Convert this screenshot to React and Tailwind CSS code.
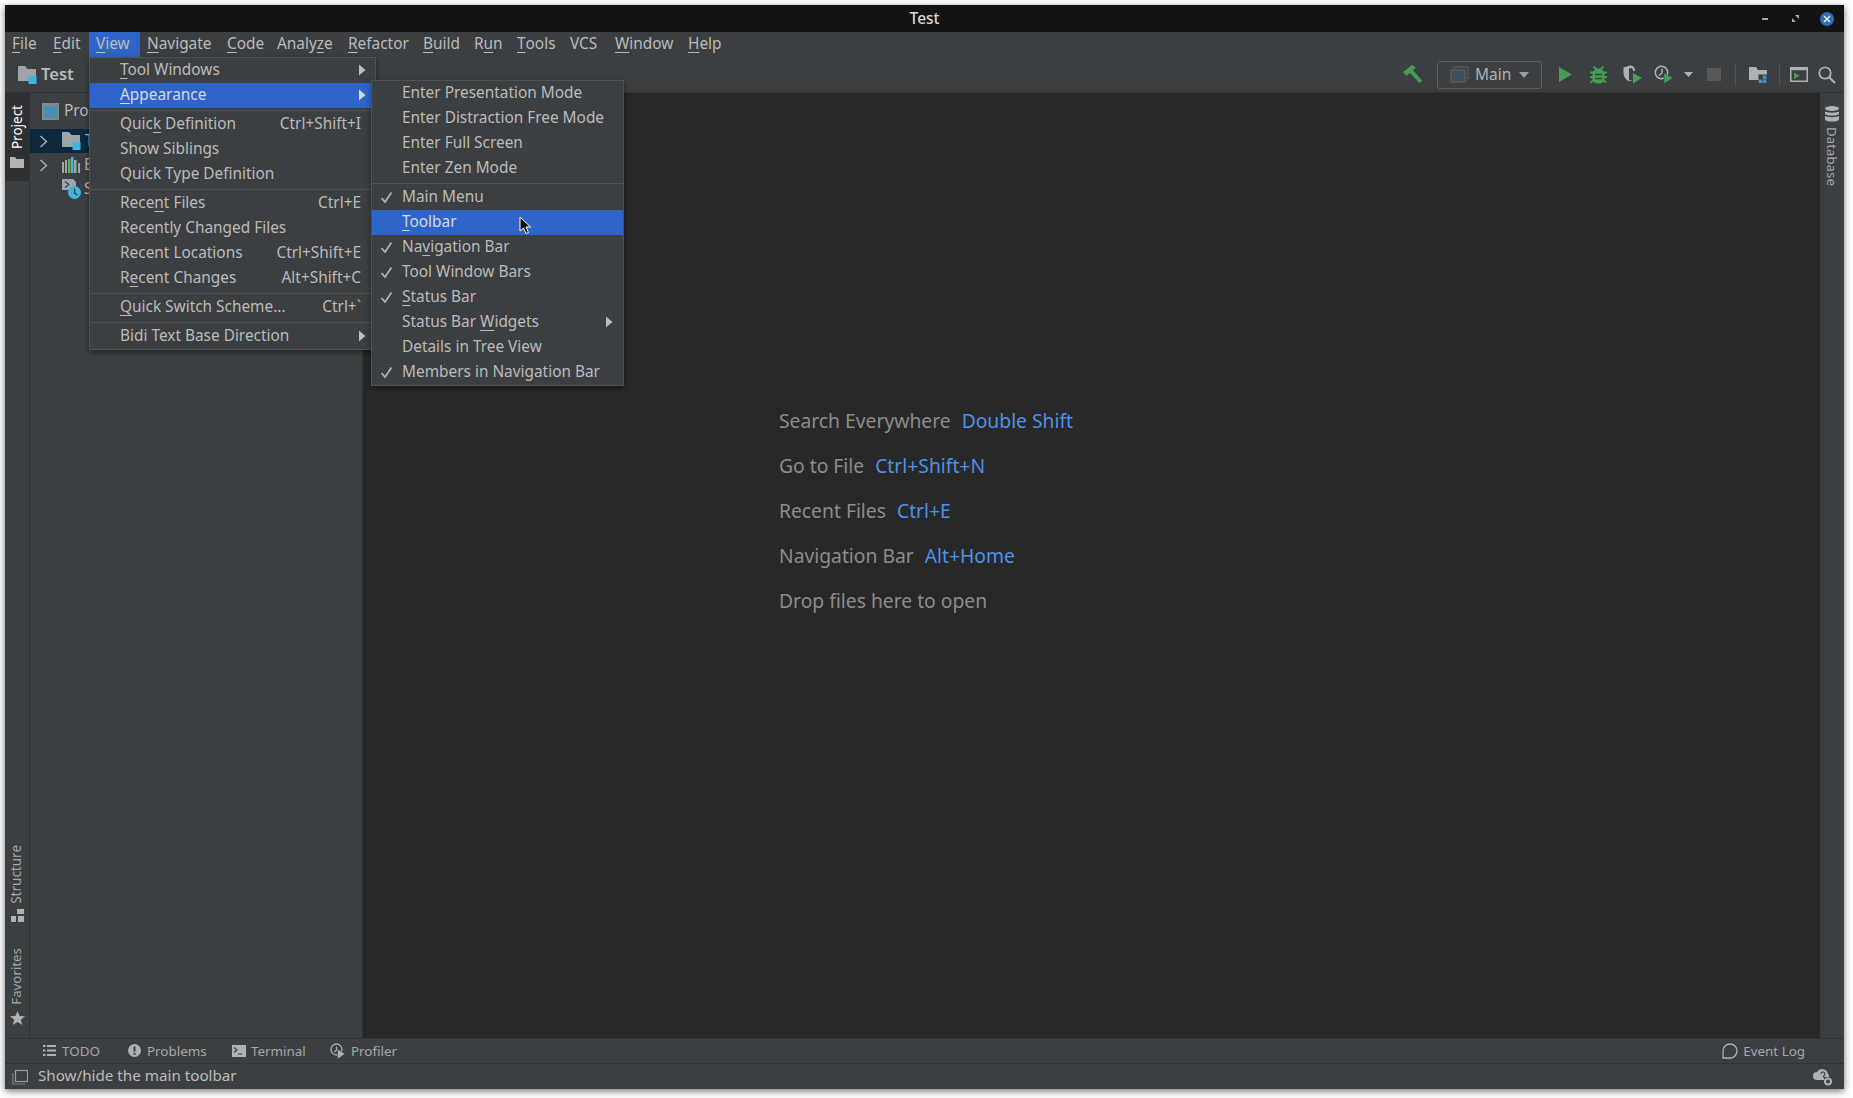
const FONT = "[font-family:'Noto_Sans','Open_Sans',sans-serif]";

function U({ children }) {
  return <span className="underline underline-offset-[3px] decoration-1">{children}</span>;
}

function MenuBarItem({ w, active, children }) {
  return (
    <div className={`h-full flex items-center pl-[7px] pb-[1px] whitespace-nowrap ${w} ${active ? "bg-[#2f65ca]" : ""}`}>
      {children}
    </div>
  );
}

function Arrow() {
  return (
    <svg width="8" height="12" viewBox="0 0 8 12" className="shrink-0">
      <path d="M1 0.5 L7.5 6 L1 11.5 Z" fill="currentColor" />
    </svg>
  );
}

function Check() {
  return (
    <svg width="13" height="13" viewBox="0 0 13 13" className="absolute left-[8px] top-[6px]">
      <path d="M1.5 7 L5 11 L11.5 1.5" fill="none" stroke="#b0b0b0" strokeWidth="1.8" />
    </svg>
  );
}

function Row({ children, shortcut, sub, selected, check, pad }) {
  return (
    <div className={`relative h-[25px] flex items-center justify-between whitespace-nowrap pb-[1px] ${pad} ${selected ? "bg-[#2f65ca] text-[#d5d9e2]" : ""}`}>
      {check && <Check />}
      <span>{children}</span>
      {shortcut && <span className="pr-[5px]">{shortcut}</span>}
      {sub && <Arrow />}
    </div>
  );
}

function Sep() {
  return (
    <div className="h-[4px] flex items-center">
      <div className="h-px w-full bg-[#515151]" />
    </div>
  );
}

function FolderBlue({ className }) {
  return (
    <svg width="19" height="18" viewBox="0 0 19 18" className={className}>
      <path d="M0 0h7l2.5 3H18v9.5h-7V15H0z" fill="#9ea5a9" />
      <rect x="10.5" y="10" width="8" height="8" fill="#3fb5e2" />
    </svg>
  );
}

function Vert({ children, className }) {
  return <span className={`[writing-mode:vertical-rl] rotate-180 leading-none whitespace-nowrap ${className}`}>{children}</span>;
}

const viewPad = "pl-[30px] pr-[9px]";
const subPad = "pl-[30px] pr-[10px]";

export default function App() {
  return (
    <div className={`relative w-[1853px] h-[1098px] bg-white pl-[5px] pt-[5px] overflow-hidden ${FONT}`}>
      <div className="relative w-[1839px] h-[1084px] flex flex-col bg-[#3c3f41] text-[#bbbbbb] text-[15.4px] shadow-[0_2px_7px_rgba(0,0,0,0.55)]">
        {/* Title bar */}
        <div className="relative h-[27px] shrink-0 bg-[#131313] flex items-center justify-center text-[#d8d8d8] text-[15.5px] font-medium">
          <span className="pt-[1px]">Test</span>
          <div className="absolute right-0 top-0 h-full flex items-center">
            <div className="w-[6px] h-[2px] bg-[#a8a8a8] mr-[24px]" />
            <svg width="7" height="7" viewBox="0 0 7 7" className="mr-[21px]">
              <path d="M3 0h4v4z M4 7H0V3z" fill="#a8a8a8" />
            </svg>
            <div className="w-[14px] h-[14px] rounded-full bg-[#2f6fb8] flex items-center justify-center mr-[10px]">
              <svg width="8" height="8" viewBox="0 0 8 8">
                <path d="M1 1 L7 7 M7 1 L1 7" stroke="#dfe6ee" strokeWidth="1.6" />
              </svg>
            </div>
          </div>
        </div>

        {/* Menu bar */}
        <div className="h-[25px] shrink-0 flex items-center">
          <MenuBarItem w="w-[41px]"><U>F</U>ile</MenuBarItem>
          <MenuBarItem w="w-[43px]"><U>E</U>dit</MenuBarItem>
          <MenuBarItem w="w-[51px]" active><U>V</U>iew</MenuBarItem>
          <MenuBarItem w="w-[80px]"><U>N</U>avigate</MenuBarItem>
          <MenuBarItem w="w-[50px]"><U>C</U>ode</MenuBarItem>
          <MenuBarItem w="w-[71px]">Analy<U>z</U>e</MenuBarItem>
          <MenuBarItem w="w-[75px]"><U>R</U>efactor</MenuBarItem>
          <MenuBarItem w="w-[51px]"><U>B</U>uild</MenuBarItem>
          <MenuBarItem w="w-[43px]">R<U>u</U>n</MenuBarItem>
          <MenuBarItem w="w-[53px]"><U>T</U>ools</MenuBarItem>
          <MenuBarItem w="w-[45px]">VCS</MenuBarItem>
          <MenuBarItem w="w-[73px]"><U>W</U>indow</MenuBarItem>
          <MenuBarItem w="w-[50px]"><U>H</U>elp</MenuBarItem>
        </div>

        {/* Navigation / tool bar */}
        <div className="h-[36px] shrink-0 flex items-center border-b border-[#323232]">
          <FolderBlue className="ml-[13px] mr-[4px]" />
          <span className="font-semibold text-[16.5px] mr-auto">Test</span>
          <svg width="20" height="19" viewBox="0 0 20 19" className="mr-[14px]">
            <path d="M0 7 L9 0 L13 2.5 L10 5 L19 15.5 L16.5 18 L7 8 L3.5 11 Z" fill="#499c54" />
          </svg>
          <div className="w-[105px] h-[28px] border border-[#5e6060] rounded-[3px] flex items-center">
            <svg width="19" height="17" viewBox="0 0 19 17" className="ml-[12px] mr-[6px]">
              <path d="M4 3V1h14v11h-2" fill="none" stroke="#55585a" strokeWidth="1.4" />
              <rect x="1" y="4" width="14" height="12" fill="#39505c" stroke="#55585a" strokeWidth="1.6" />
            </svg>
            <span className="text-[#aeb2b5] text-[15.5px] w-[44px]">Main</span>
            <svg width="10" height="6" viewBox="0 0 10 6"><path d="M0 0h10L5 6z" fill="#9b9ea0" /></svg>
          </div>
          <svg width="13" height="15" viewBox="0 0 13 15" className="ml-[17px]"><path d="M0 0 L13 7.5 L0 15 Z" fill="#499c54" /></svg>
          <svg width="17" height="18" viewBox="0 0 17 18" className="ml-[18px]">
            <path d="M3.5 0.5 L6.5 3.5 H10.5 L13.5 0.5 M0 6.5h3 M14 6.5h3 M0 11h3 M14 11h3 M0.5 16.5 L4 14 M16.5 16.5 L13 14" fill="none" stroke="#499c54" strokeWidth="2" />
            <rect x="2.5" y="3" width="12" height="14.5" rx="5" fill="#499c54" />
            <path d="M5 8.5h7 M5 12.5h7" stroke="#3c3f41" strokeWidth="1.3" />
          </svg>
          <svg width="20" height="19" viewBox="0 0 20 19" className="ml-[16px]">
            <path d="M0.5 2.5 L7 0.5 L10 1.5 V15 L6 16 C3 15 0.5 12 0.5 7 Z" fill="#afb1b3" />
            <path d="M6 3.5 L9 3 C10.5 3 11 4 11 5 V15 L6 15 Z" fill="#3c3f41" />
            <path d="M7 0.5 C11 0.7 12 3 12 6 H10 C10 3.5 9 2.5 7 2.5 Z" fill="#afb1b3" />
            <path d="M10 8 L19 13 L10 18.5 Z" fill="#499c54" />
          </svg>
          <svg width="20" height="19" viewBox="0 0 20 19" className="ml-[11px]">
            <circle cx="7.5" cy="7.5" r="6.2" fill="none" stroke="#afb1b3" strokeWidth="1.5" />
            <path d="M8 3.5 V8 L5 10.5" fill="none" stroke="#afb1b3" strokeWidth="1.4" />
            <path d="M10 8 L19 13 L10 18.5 Z" fill="#499c54" stroke="#3c3f41" strokeWidth="0.5" />
          </svg>
          <svg width="9" height="5" viewBox="0 0 9 5" className="ml-[10px]"><path d="M0 0h9L4.5 5z" fill="#afb1b3" /></svg>
          <div className="w-[14px] h-[13px] bg-[#585858] ml-[14px]" />
          <div className="w-px h-[23px] bg-[#505254] ml-[14px]" />
          <svg width="18" height="16" viewBox="0 0 18 16" className="ml-[13px]">
            <path d="M0 0h7l2 3h9v4.5H9.5V13H0z" fill="#afb1b3" />
            <path d="M13.8 8.5h3.6v3.4h-3.6z M9.8 12.5h3.4V16H9.8z M13.8 12.5h3.6V16h-3.6z" fill="#3d8fc6" />
          </svg>
          <div className="w-px h-[23px] bg-[#505254] ml-[12px]" />
          <svg width="18" height="15" viewBox="0 0 18 15" className="ml-[10px]">
            <rect x="0.75" y="0.75" width="16.5" height="13.5" fill="none" stroke="#afb1b3" strokeWidth="1.5" />
            <rect x="0.75" y="0.75" width="16.5" height="2.5" fill="#afb1b3" />
            <path d="M4 5.5 L10 8.7 L4 12 Z" fill="#499c54" />
          </svg>
          <svg width="18" height="18" viewBox="0 0 18 18" className="ml-[10px] mr-[8px]">
            <circle cx="7" cy="7" r="5.7" fill="none" stroke="#afb1b3" strokeWidth="1.8" />
            <path d="M11 11 L17 17" stroke="#afb1b3" strokeWidth="2.2" />
          </svg>
        </div>

        {/* Middle */}
        <div className="flex-1 min-h-0 flex">
          {/* Left stripe */}
          <div className="w-[25px] shrink-0 border-r border-[#323232] flex flex-col justify-between items-center">
            <div className="w-full h-[88px] bg-[#2e3031] flex flex-col items-center pt-[12px] gap-[8px]">
              <Vert className="text-white text-[13.5px] ml-[1px]">Project</Vert>
              <svg width="14" height="11" viewBox="0 0 14 11"><path d="M0 0h5l1.5 2H14v9H0z" fill="#b4b4b4" /></svg>
            </div>
            <div className="flex flex-col items-center mb-[13px]">
              <Vert className="text-[#a5a8aa] text-[13.5px]">Structure</Vert>
              <svg width="13" height="13" viewBox="0 0 13 13" className="mt-[5px] mb-[26px]">
                <path d="M6 0h7v5H6z M0 7h5v6H0z M7 7h6v6H7z" fill="#afb1b3" />
              </svg>
              <Vert className="text-[#a5a8aa] text-[13.3px]">Favorites</Vert>
              <svg width="15" height="14" viewBox="0 0 15 14" className="mt-[6px]">
                <path d="M7.5 0 L9.6 5 L15 5.3 L10.8 8.7 L12.2 14 L7.5 11 L2.8 14 L4.2 8.7 L0 5.3 L5.4 5 Z" fill="#b0b0b0" />
              </svg>
            </div>
          </div>

          {/* Project panel */}
          <div className="w-[333px] shrink-0 flex flex-col border-r border-[#323232]">
            <div className="h-[36px] flex items-center pl-[12px] gap-[5px]">
              <svg width="17" height="17" viewBox="0 0 17 17">
                <rect x="1" y="1" width="15" height="15" fill="#478fb3" stroke="#82898d" strokeWidth="2" />
                <rect x="1" y="1" width="15" height="2.5" fill="#82898d" />
              </svg>
              <span>Pro</span>
            </div>
            <div className="h-[24px] bg-[#0d293e] flex items-center pl-[9px]">
              <svg width="9" height="13" viewBox="0 0 9 13" className="mr-[14px]"><path d="M1.5 1 L7.5 6.5 L1.5 12" fill="none" stroke="#afb1b3" strokeWidth="1.4" /></svg>
              <FolderBlue className="mr-[4px]" />
              <span>T</span>
            </div>
            <div className="h-[24px] flex items-center pl-[9px]">
              <svg width="9" height="13" viewBox="0 0 9 13" className="mr-[14px]"><path d="M1.5 1 L7.5 6.5 L1.5 12" fill="none" stroke="#afb1b3" strokeWidth="1.4" /></svg>
              <svg width="18" height="16" viewBox="0 0 18 16" className="mr-[4px]">
                <path d="M0 5h2v11H0z M3 3h2v13H3z M12 3h2.5v13H12z M16 6h2v10h-2z" fill="#9aa7b0" />
                <path d="M6 2h2.5v14H6z" fill="#62b543" />
                <path d="M9 0h2.5v16H9z" fill="#40b6e0" />
              </svg>
              <span>E</span>
            </div>
            <div className="h-[24px] flex items-center pl-[32px]">
              <svg width="19" height="20" viewBox="0 0 19 20" className="mr-[3px]">
                <path d="M0 0h11l3 3v4a6 6 0 0 0-6 4H0z" fill="#9aa7b0" />
                <path d="M3 2.5 L7 5.5 L3 8.5" fill="none" stroke="#3c3f41" strokeWidth="1.2" />
                <circle cx="12.5" cy="13.5" r="6.5" fill="#40b6e0" />
                <path d="M12.5 9.5 V14 L15.5 16" fill="none" stroke="#3c3f41" strokeWidth="1.4" />
              </svg>
              <span>S</span>
            </div>
          </div>

          {/* Editor */}
          <div className="flex-1 min-w-0 bg-[#282828] pl-[416px] pt-[305px] text-[19.3px] text-[#8c8c8c] leading-[45px]">
            <div>Search Everywhere<span className="ml-[11px] text-[#4e91ea]">Double Shift</span></div>
            <div>Go to File<span className="ml-[11px] text-[#4e91ea]">Ctrl+Shift+N</span></div>
            <div>Recent Files<span className="ml-[11px] text-[#4e91ea]">Ctrl+E</span></div>
            <div>Navigation Bar<span className="ml-[11px] text-[#4e91ea]">Alt+Home</span></div>
            <div>Drop files here to open</div>
          </div>

          {/* Right stripe */}
          <div className="w-[24px] shrink-0 flex flex-col items-center pt-[13px] gap-[5px] pr-[1px]">
            <svg width="14" height="16" viewBox="0 0 14 16">
              <ellipse cx="7" cy="2.5" rx="7" ry="2.5" fill="#afb1b3" />
              <path d="M0 5.5c2 1.5 12 1.5 14 0V8c-2 2-12 2-14 0z M0 10c2 1.5 12 1.5 14 0v3.5c-2 3-12 3-14 0z" fill="#afb1b3" />
            </svg>
            <span className="[writing-mode:vertical-rl] text-[13.3px] leading-none text-[#a5a8aa]">Database</span>
          </div>
        </div>

        {/* Tool windows bar */}
        <div className="h-[25px] shrink-0 flex items-center border-t border-[#323232] text-[13.4px] text-[#a5a8aa] pl-[38px]">
          <div className="flex items-center gap-[6px] w-[85px]">
            <svg width="13" height="11" viewBox="0 0 13 11"><path d="M0 0h2.5v2H0z M0 4.5h2.5v2H0z M0 9h2.5v2H0z M4 0h9v2H4z M4 4.5h9v2H4z M4 9h9v2H4z" fill="#afb1b3" /></svg>
            <span>TODO</span>
          </div>
          <div className="flex items-center gap-[6px] w-[104px]">
            <svg width="13" height="13" viewBox="0 0 13 13"><circle cx="6.5" cy="6.5" r="6.5" fill="#afb1b3" /><path d="M5.5 2.5h2v5h-2z M5.5 8.8h2v2h-2z" fill="#3c3f41" /></svg>
            <span>Problems</span>
          </div>
          <div className="flex items-center gap-[5px] w-[98px]">
            <svg width="14" height="12" viewBox="0 0 14 12"><rect width="14" height="12" fill="#afb1b3" /><path d="M2 2.5 L5 5 L2 7.5 M6 9h4" fill="none" stroke="#3c3f41" strokeWidth="1.2" /></svg>
            <span>Terminal</span>
          </div>
          <div className="flex items-center gap-[5px]">
            <svg width="16" height="16" viewBox="0 0 16 16">
              <circle cx="6.5" cy="6.5" r="5.5" fill="none" stroke="#afb1b3" strokeWidth="1.3" />
              <path d="M6.5 3.5 V7 L4.5 9" fill="none" stroke="#afb1b3" strokeWidth="1.2" />
              <path d="M7.5 6 L15 11 L7.5 16 Z" fill="#afb1b3" stroke="#3c3f41" strokeWidth="0.6" />
            </svg>
            <span>Profiler</span>
          </div>
          <div className="ml-auto mr-[39px] flex items-center gap-[5px]">
            <svg width="16" height="16" viewBox="0 0 16 16">
              <path d="M8 1a7 7 0 1 1 0 14H1V8a7 7 0 0 1 7-7z" fill="none" stroke="#afb1b3" strokeWidth="1.3" />
            </svg>
            <span>Event Log</span>
          </div>
        </div>

        {/* Status bar */}
        <div className="h-[26px] shrink-0 flex items-center border-t border-[#323232] pl-[7px] text-[15.2px]">
          <svg width="16" height="16" viewBox="0 0 16 16" className="mr-[10px]">
            <rect x="3.5" y="1.5" width="12" height="11" fill="none" stroke="#9a9c9e" strokeWidth="1.2" />
            <path d="M0.8 4 V15 H13" fill="none" stroke="#7c7e80" strokeWidth="1.2" />
          </svg>
          <span className="pb-[2px]">Show/hide the main toolbar</span>
          <svg width="20" height="18" viewBox="0 0 20 18" className="ml-auto mr-[11px]">
            <path d="M4 12a4 4 0 0 1 0-8 6 6 0 0 1 11 2 3 3 0 0 1 1 3h-5v3z" fill="#afb1b3" />
            <path d="M8 6a2 2 0 1 1 2.5 2 V9.5" fill="none" stroke="#3c3f41" strokeWidth="1.1" />
            <circle cx="15" cy="13.5" r="3" fill="none" stroke="#afb1b3" strokeWidth="2" />
          </svg>
        </div>

        {/* View menu */}
        <div className="absolute left-[84px] top-[52px] w-[287px] h-[293px] z-10 bg-[#3c3f41] border border-[#515151] shadow-[0_2px_6px_rgba(0,0,0,0.45)]">
          <Row sub pad={viewPad}><U>T</U>ool Windows</Row>
          <Row sub selected pad={viewPad}><U>A</U>ppearance</Row>
          <Sep />
          <Row shortcut="Ctrl+Shift+I" pad={viewPad}>Quic<U>k</U> Definition</Row>
          <Row pad={viewPad}>Show Siblings</Row>
          <Row pad={viewPad}>Quick Type Definition</Row>
          <Sep />
          <Row shortcut="Ctrl+E" pad={viewPad}>Rece<U>n</U>t Files</Row>
          <Row pad={viewPad}>Recently Changed Files</Row>
          <Row shortcut="Ctrl+Shift+E" pad={viewPad}>Recent Locations</Row>
          <Row shortcut="Alt+Shift+C" pad={viewPad}>R<U>e</U>cent Changes</Row>
          <Sep />
          <Row shortcut="Ctrl+`" pad={viewPad}><U>Q</U>uick Switch Scheme...</Row>
          <Sep />
          <Row sub pad={viewPad}>Bidi Text Base Direction</Row>
        </div>

        {/* Appearance submenu */}
        <div className="absolute left-[366px] top-[75px] w-[253px] h-[306px] z-20 bg-[#3c3f41] border border-[#515151] shadow-[0_2px_6px_rgba(0,0,0,0.45)]">
          <Row pad={subPad}>Enter Presentation Mode</Row>
          <Row pad={subPad}>Enter Distraction Free Mode</Row>
          <Row pad={subPad}>Enter Full Screen</Row>
          <Row pad={subPad}>Enter Zen Mode</Row>
          <Sep />
          <Row check pad={subPad}>Main Menu</Row>
          <Row selected pad={subPad}><U>T</U>oolbar</Row>
          <Row check pad={subPad}>Na<U>v</U>igation Bar</Row>
          <Row check pad={subPad}>Tool Window Bars</Row>
          <Row check pad={subPad}><U>S</U>tatus Bar</Row>
          <Row sub pad={subPad}><span>Status Bar <U>W</U>idgets</span></Row>
          <Row pad={subPad}>Details in Tree View</Row>
          <Row check pad={subPad}>Members in Navigation Bar</Row>
        </div>

        {/* Mouse pointer */}
        <svg width="13" height="19" viewBox="0 0 13 19" className="absolute left-[514px] top-[211px] z-30">
          <path d="M1 1 V15 L4.5 12 L7 17.5 L9.5 16.5 L7 11 L11.5 11 Z" fill="#111" stroke="#fff" strokeWidth="1" />
        </svg>
      </div>
    </div>
  );
}
